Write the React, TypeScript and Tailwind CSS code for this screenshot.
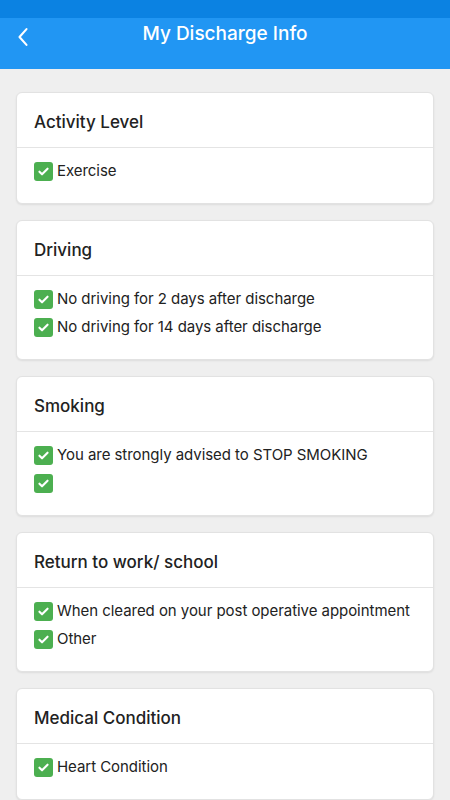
import React from 'react';

interface Section {
  title: string;
  items: string[];
}

const sections: Section[] = [
  { title: 'Activity Level', items: ['Exercise'] },
  {
    title: 'Driving',
    items: ['No driving for 2 days after discharge', 'No driving for 14 days after discharge'],
  },
  { title: 'Smoking', items: ['You are strongly advised to STOP SMOKING', ''] },
  {
    title: 'Return to work/ school',
    items: ['When cleared on your post operative appointment', 'Other'],
  },
  { title: 'Medical Condition', items: ['Heart Condition'] },
];

function CheckBox() {
  return (
    <span className="flex h-[19px] w-[19px] shrink-0 items-center justify-center rounded-[3px] bg-[#4caf50]">
      <svg viewBox="0 0 16 16" className="h-[13px] w-[13px]" fill="none">
        <path d="M3 8.2l3.2 3.2L13 4.6" stroke="white" strokeWidth="2.6" strokeLinecap="round" strokeLinejoin="round" />
      </svg>
    </span>
  );
}

export default function App() {
  return (
    <div className="flex h-[800px] w-[450px] flex-col overflow-hidden bg-[#efefef] font-['Inter','Liberation_Sans',sans-serif]">
      <div className="h-[18px] shrink-0 bg-[#0b82e2]" />
      <header className="relative flex h-[51px] shrink-0 items-start justify-center bg-[#2196f3] pt-[2px]">
        <button className="absolute left-[16px] top-[8px] text-white">
          <svg viewBox="0 0 16 24" className="h-[22px] w-[14px]" fill="none">
            <path d="M12 3L4 12l8 9" stroke="white" strokeWidth="2.4" strokeLinecap="round" strokeLinejoin="round" />
          </svg>
        </button>
        <h1 className="text-[19px] font-medium leading-[28px] text-white">My Discharge Info</h1>
      </header>

      <main className="flex shrink-0 flex-col gap-4 px-4 pt-[23px]">
        {sections.map((s) => (
          <div key={s.title} className="shrink-0 rounded-[6px] border border-[#e2e2e2] bg-white shadow-[0_1px_2px_rgba(0,0,0,0.08)]">
            <div className="flex h-[55px] items-center border-b border-[#e4e4e4] px-[17px] pt-[5px]">
              <h2 className="text-[17px] font-medium text-[#222]">{s.title}</h2>
            </div>
            <div className="px-[17px] pb-[18px] pt-[9px]">
              {s.items.map((item, i) => (
                <div key={i} className="flex h-[28px] items-center gap-[4px]">
                  <CheckBox />
                  <span className="text-[15px] tracking-[-0.05px] text-[#222]">{item}</span>
                </div>
              ))}
            </div>
          </div>
        ))}
      </main>
    </div>
  );
}
